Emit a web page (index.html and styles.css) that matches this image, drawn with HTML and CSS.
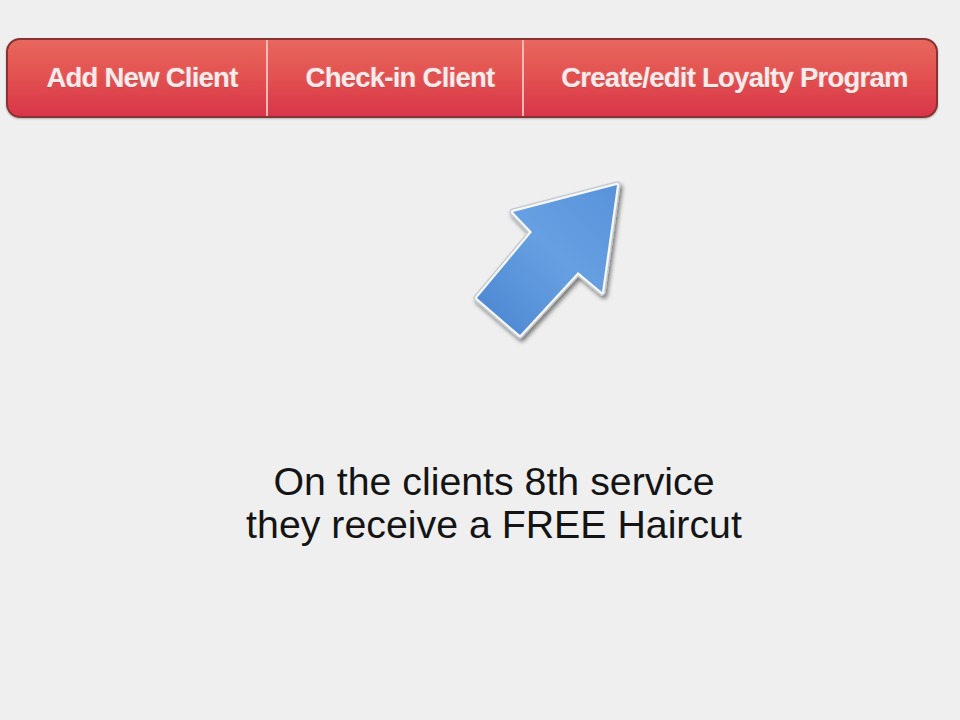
FILE: index.html
```html
<!DOCTYPE html>
<html>
<head>
<meta charset="utf-8">
<link rel="stylesheet" href="styles.css">
</head>
<body>
<div class="page">
  <nav class="menu">
    <div class="item item-add">Add New Client</div>
    <div class="item item-check">Check-in Client</div>
    <div class="item item-loyalty">Create/edit Loyalty Program</div>
  </nav>
  <div class="arrow-wrap">
    <svg class="arrow" width="180" height="190" viewBox="460 170 180 190">
      <defs>
        <linearGradient id="ag" x1="1" y1="0" x2="0" y2="1">
          <stop offset="0" stop-color="#5892da"/>
          <stop offset="0.45" stop-color="#67a0e2"/>
          <stop offset="1" stop-color="#4984d0"/>
        </linearGradient>
        <filter id="sh" x="-20%" y="-20%" width="140%" height="140%">
          <feGaussianBlur in="SourceAlpha" stdDeviation="2.2"/>
          <feOffset dx="1.5" dy="3" result="b"/>
          <feComponentTransfer><feFuncA type="linear" slope="0.5"/></feComponentTransfer>
          <feMerge><feMergeNode/><feMergeNode in="SourceGraphic"/></feMerge>
        </filter>
      </defs>
      <polygon filter="url(#sh)" points="617,185 513,212 532,232 477,298 520,335 578,272 602,292" fill="#c2c8ce" stroke="#c2c8ce" stroke-width="7" stroke-linejoin="round"/>
      <polygon points="617,185 513,212 532,232 477,298 520,335 578,272 602,292" fill="url(#ag)" stroke="#f5f7f9" stroke-width="4.5" stroke-linejoin="round"/>
      <polygon points="617,185 513,212 532,232 477,298 520,335 578,272 602,292" fill="url(#ag)"/>
    </svg>
  </div>
  <div class="message">
    <p>On the clients 8th service<br>they receive a FREE Haircut</p>
  </div>
</div>
</body>
</html>
```
FILE: styles.css
```css
html, body {
  margin: 0;
  padding: 0;
  background: #efefef;
}
.page {
  width: 960px;
  height: 720px;
  overflow: hidden;
  padding-top: 38px;
  box-sizing: border-box;
}
.menu {
  margin-left: 6px;
  width: 932px;
  height: 80px;
  box-sizing: border-box;
  display: flex;
  border: 2px solid #863333;
  border-radius: 14px;
  background: linear-gradient(to bottom, #e8675e 0%, #e2504f 50%, #d9354a 100%);
  box-shadow: 0 1px 2px rgba(0,0,0,0.25);
  overflow: hidden;
}
.item {
  display: flex;
  align-items: center;
  justify-content: center;
  font-family: "Liberation Sans", Arial, sans-serif;
  font-weight: bold;
  font-size: 27.5px;
  letter-spacing: -0.75px;
  color: #fbeaea;
  text-shadow: 0 0 2px rgba(255,255,255,0.35), 0 1px 1px rgba(120,20,30,0.35);
  box-sizing: border-box;
  padding-left: 10px;
}
.item-add {
  width: 260px;
  border-right: 2px solid #f7b7b7;
}
.item-check {
  width: 256px;
  border-right: 2px solid #f7b7b7;
}
.item-loyalty {
  flex: 1;
  padding-left: 9px;
}
.arrow-wrap {
  margin-top: 52px;
  padding-left: 460px;
  height: 190px;
}
.arrow {
  display: block;
}
.message {
  margin-top: 100px;
  padding-left: 28px;
  text-align: center;
}
.message p {
  margin: 0;
  font-family: "Liberation Sans", Arial, sans-serif;
  font-size: 39.3px;
  line-height: 43px;
  color: #141414;
}
```
